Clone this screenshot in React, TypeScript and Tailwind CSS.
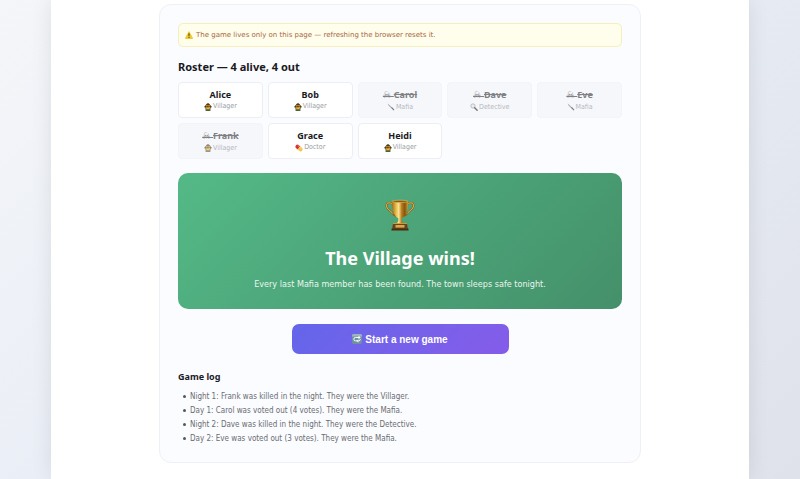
import type { ReactNode } from "react";

type Role = "Villager" | "Mafia" | "Detective" | "Doctor";

const players: { name: string; role: Role; out?: boolean }[] = [
  { name: "Alice", role: "Villager" },
  { name: "Bob", role: "Villager" },
  { name: "Carol", role: "Mafia", out: true },
  { name: "Dave", role: "Detective", out: true },
  { name: "Eve", role: "Mafia", out: true },
  { name: "Frank", role: "Villager", out: true },
  { name: "Grace", role: "Doctor" },
  { name: "Heidi", role: "Villager" },
];

const log = [
  "Night 1: Frank was killed in the night. They were the Villager.",
  "Day 1: Carol was voted out (4 votes). They were the Mafia.",
  "Night 2: Dave was killed in the night. They were the Detective.",
  "Day 2: Eve was voted out (3 votes). They were the Mafia.",
];

function Warning() {
  return (
    <svg className="size-2 shrink-0" viewBox="0 0 16 16" aria-hidden="true">
      <path d="M8 1.2 15.2 14a.9.9 0 0 1-.8 1.3H1.6A.9.9 0 0 1 .8 14Z" fill="#f3cb2a" stroke="#d9aa10" strokeWidth=".8" />
      <path d="M6.800 5.200h2.400l-.5 5.200H7.300Z" fill="#3b3208" />
      <circle cx="8" cy="12.600" r="1.200" fill="#3b3208" />
    </svg>
  );
}

const roleDrawings: Record<Role, ReactNode> = {
  Villager: (
    <>
      <path d="M0 8 4 3.500C5 1.500 6.500.5 8 .5s3 1 4 3L16 8l-3 1.500v4H3v-4Z" fill="#4a3d20" />
      <path d="M3.500 4h9v1.500h-9Z" fill="#c79a35" />
      <circle cx="8" cy="9" r="4.200" fill="#f2b52f" />
      <path d="M3.600 8.800C3.800 6.500 6 5.500 8 5.500s4.200 1 4.400 3.300L9.500 7.300Z" fill="#6b431d" />
      <path d="M2.500 16c.3-2.200 2-3.200 5.500-3.200s5.200 1 5.500 3.200Z" fill="#47683a" />
      <circle cx="6.500" cy="9.500" r=".7" fill="#3b2a10" />
      <circle cx="9.500" cy="9.500" r=".7" fill="#3b2a10" />
    </>
  ),
  Mafia: (
    <>
      <path d="M1.500 1.200 10 9 8.600 10.400C5 8 2 4.500 1.500 1.200Z" fill="#6d747c" />
      <path d="m8.200 9.800 1.600-1.600 5 5.300-1.300 1.300Z" fill="#1d2026" />
    </>
  ),
  Detective: (
    <>
      <circle cx="6" cy="6" r="4.300" fill="#dfe9ef" stroke="#7a8189" strokeWidth="1.500" />
      <path d="m9.300 9.300 5 5" stroke="#1d2026" strokeWidth="2.800" strokeLinecap="round" />
    </>
  ),
  Doctor: (
    <g transform="rotate(42 8 8)">
      <path d="M8 4v8H4a4 4 0 0 1 0-8Z" fill="#d93030" />
      <path d="M8 4h4a4 4 0 0 1 0 8H8Z" fill="#f4c443" />
      <path d="M3 6h9.500" stroke="#fff" strokeOpacity=".6" strokeWidth="1.200" />
    </g>
  ),
};

function RoleIcon({ role }: { role: Role }) {
  return (
    <svg className="size-2 shrink-0" viewBox="0 0 16 16" aria-hidden="true">
      {roleDrawings[role]}
    </svg>
  );
}

function Trophy() {
  return (
    <svg className="h-8 w-8" viewBox="0 0 32 32" aria-hidden="true">
      <defs>
        <linearGradient id="cup" x1="0" x2="1">
          <stop offset="0" stopColor="#a56c18" />
          <stop offset=".25" stopColor="#e8b949" />
          <stop offset=".42" stopColor="#fbe493" />
          <stop offset=".6" stopColor="#b97c1c" />
          <stop offset=".8" stopColor="#85540f" />
          <stop offset="1" stopColor="#cf9a33" />
        </linearGradient>
      </defs>
      <path d="M9 5C5.500 3.200 2.500 3.400 2.500 6.400c0 4 4 5 6.500 8.300.8 1 1.700 1.800 3.200 2M23 5c3.500-1.800 6.500-1.600 6.500 1.400 0 4-4 5-6.500 8.300-.8 1-1.700 1.800-3.200 2" fill="none" stroke="#8f6018" strokeWidth="2" />
      <path d="M9 5C5.500 3.200 2.500 3.400 2.500 6.400c0 4 4 5 6.500 8.300M23 5c3.500-1.800 6.500-1.600 6.500 1.400 0 4-4 5-6.500 8.300" fill="none" stroke="#e6bd5c" strokeWidth="1" />
      <path d="M8 2h16c.3 7-1 14.500-6.300 17.200v2.300c0 1.700 1.200 2.500 3.300 3.500H11c2.100-1 3.300-1.800 3.300-3.500v-2.300C9 16.500 7.700 9 8 2Z" fill="url(#cup)" />
      <ellipse cx="16" cy="2.400" rx="8" ry="1.200" fill="#8c5b14" stroke="#e6bd5c" strokeWidth=".6" />
      <path d="M9 24.500h14l1 6H8Z" fill="#6b421a" />
      <path d="M7.500 29.600h17v1.900h-17Z" fill="#4a2c12" />
      <path d="M11.500 26h9v2.600h-9Z" fill="#d9a945" />
      <path d="M9 24.500h14" stroke="#dba642" strokeWidth=".8" />
    </svg>
  );
}

function Repeat() {
  return (
    <svg className="size-[10px]" viewBox="0 0 16 16" aria-hidden="true">
      <rect width="16" height="16" rx="2.500" fill="#6f8fa3" />
      <path d="M0 2.500A2.500 2.500 0 0 1 2.500 0h11A2.500 2.500 0 0 1 16 2.500V4H0Z" fill="#9bb5c3" />
      <path d="M12.500 5.500h-7a2.500 2.500 0 0 0-2.500 2.500v.5a2.500 2.500 0 0 0 2.500 2.500H8M11 11a2.500 2.500 0 0 0 2.300-2.700" fill="none" stroke="#fff" strokeWidth="1.600" />
      <path d="m10.500 2.800 3.500 2.700-3.500 2.700ZM10.500 8.500 7 11l3.500 2.700Z" fill="#fff" />
    </svg>
  );
}

export default function App() {
  return (
    <div className="min-h-screen bg-linear-135 from-[#f4f6f9] via-[#e8ecf5] to-[#dfe2eb] px-[51px] font-['DejaVu_Sans_Condensed','DejaVu_Sans',sans-serif] text-[#1a1a1f]">
      <main className="min-h-screen bg-white px-4 pt-1 pb-4 shadow-[0_0_20px_rgba(0,0,0,0.09)]">
        <div className="mx-auto max-w-[482px] rounded-xl border border-[#edf0f5] bg-[#fbfcff] px-[18px] pt-[18px] pb-4">
          <p className="flex h-6 items-center gap-[3px] rounded-[5px] border border-[#f6f0b8] bg-[#fffdec] px-[6px] font-['DejaVu_Sans',sans-serif] text-[7px] text-[#a8683f]">
            <Warning />
            The game lives only on this page — refreshing the browser resets it.
          </p>

          <h2 className="mt-3 font-['Noto_Sans',sans-serif] text-[11px] leading-4 font-bold">
            Roster — 4 alive, 4 out
          </h2>
          <ul className="mt-[7px] grid grid-cols-5 gap-[5px]">
            {players.map((p) => (
              <li
                key={p.name}
                className={
                  "flex h-9 flex-col items-center justify-center rounded-[4px] border " +
                  (p.out ? "border-[#f2f4f8] bg-[#f6f7fb]" : "border-[#eceef3] bg-white")
                }
              >
                <span
                  className={
                    "font-['Noto_Sans','DejaVu_Sans',sans-serif] text-[9px] leading-[13px] font-bold " +
                    (p.out ? "text-[#808185] line-through" : "")
                  }
                >
                  {p.out && <span className="font-['DejaVu_Sans'] font-normal">☠ </span>}
                  {p.name}
                </span>
                <span
                  className={
                    "flex items-center gap-px text-[7px] leading-[11px] " +
                    (p.out ? "text-[#8a8d94] opacity-60" : "text-[#9b9da2]")
                  }
                >
                  <RoleIcon role={p.role} />
                  {p.role}
                </span>
              </li>
            ))}
          </ul>

          <section className="mt-[14px] flex flex-col items-center rounded-[10px] bg-linear-135 from-[#54b987] to-[#44906a] pt-[26px] pb-[18px] text-center text-white">
            <Trophy />
            <h1 className="mt-[15px] font-['Noto_Sans',sans-serif] text-[18px] leading-6 font-bold">
              The Village wins!
            </h1>
            <p className="mt-[7px] text-[9px] leading-[14px] text-[#e9f6ef]">
              Every last Mafia member has been found. The town sleeps safe tonight.
            </p>
          </section>

          <button
            type="button"
            className="mx-auto mt-[15px] flex h-[30px] w-[217px] items-center justify-center gap-[3px] rounded-[7px] bg-linear-135 from-[#6366ea] to-[#855cea] font-['Liberation_Sans',sans-serif] text-[10px] font-bold text-white"
          >
            <Repeat />
            Start a new game
          </button>

          <h3 className="mt-4 font-['Noto_Sans',sans-serif] text-[9px] leading-[14px] font-bold">Game log</h3>
          <ul className="mt-[6px] pl-[5px] text-[8px] leading-[14px] text-[#6a6c71]">
            {log.map((entry) => (
              <li
                key={entry}
                className="flex items-start gap-1 before:mt-[5px] before:size-[3px] before:rounded-full before:bg-[#55575c]"
              >
                {entry}
              </li>
            ))}
          </ul>
        </div>
      </main>
    </div>
  );
}
